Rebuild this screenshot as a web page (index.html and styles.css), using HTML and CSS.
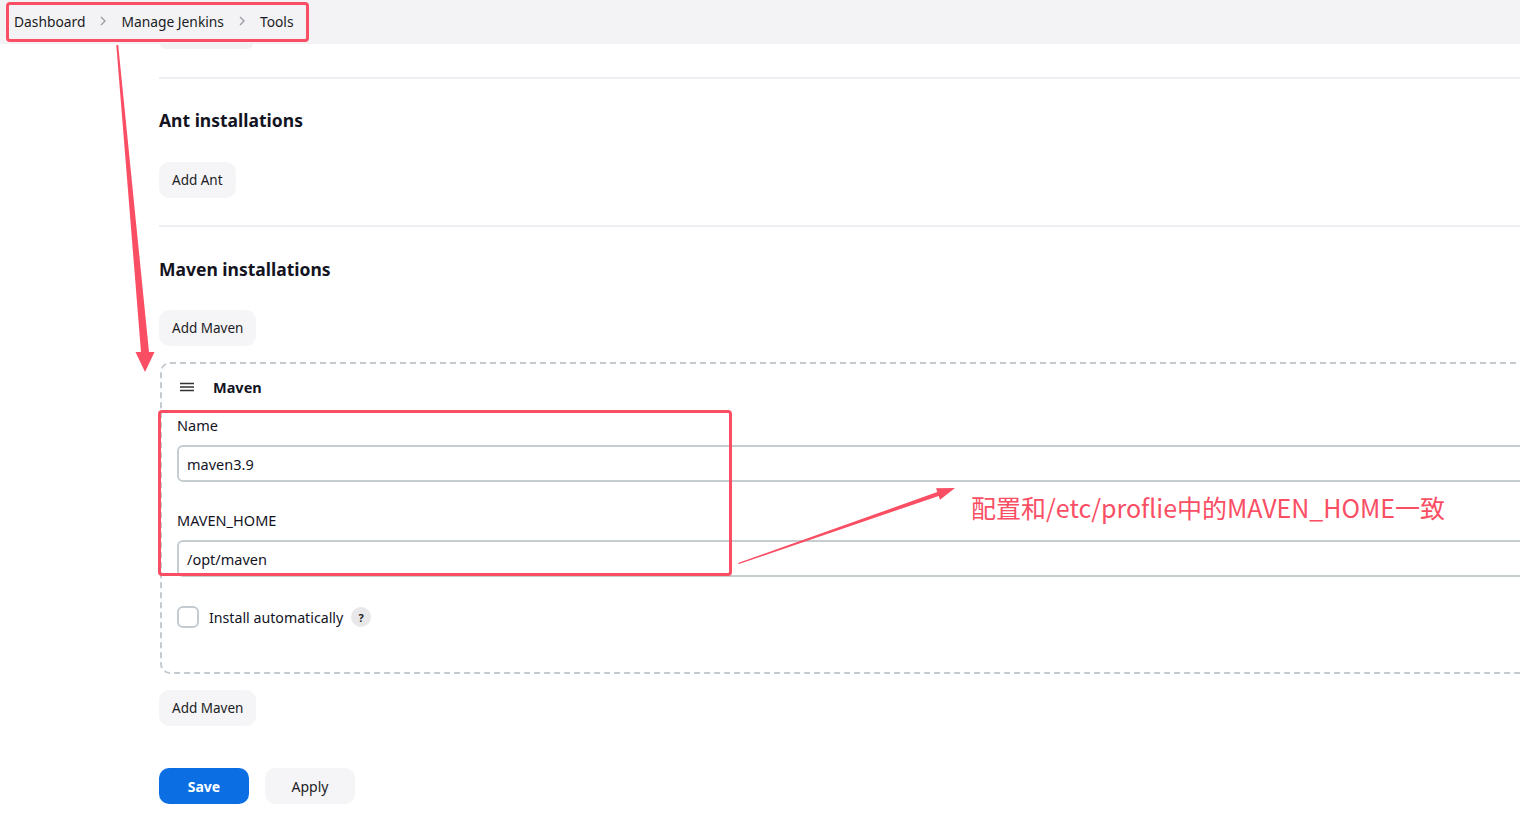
FILE: index.html
```html
<!DOCTYPE html>
<html lang="en">
<head>
<meta charset="utf-8">
<title>Tools - Jenkins</title>
<link rel="stylesheet" href="styles.css">
</head>
<body>
<header class="crumbs">
  <a class="crumb">Dashboard</a>
  <span class="sep"><svg width="10" height="12" viewBox="0 0 10 12"><path d="M3 2l4 4-4 4" fill="none" stroke="#9a9aa2" stroke-width="1.3"/></svg></span>
  <a class="crumb">Manage Jenkins</a>
  <span class="sep"><svg width="10" height="12" viewBox="0 0 10 12"><path d="M3 2l4 4-4 4" fill="none" stroke="#9a9aa2" stroke-width="1.3"/></svg></span>
  <a class="crumb">Tools</a>
</header>
<main class="page">
  <div class="stub"></div>
  <section class="section">
    <h2 class="title">Ant installations</h2>
    <button class="btn">Add Ant</button>
  </section>
  <section class="section">
    <h2 class="title">Maven installations</h2>
    <button class="btn">Add Maven</button>
    <div class="repeat">
      <div class="repeat-head">
        <svg class="drag" width="16" height="12" viewBox="0 0 16 12"><path d="M1 2.5h14M1 6h14M1 9.5h14" stroke="#333" stroke-width="1.5"/></svg>
        <span class="repeat-name">Maven</span>
      </div>
      <div class="field">
        <label class="label">Name</label>
        <div class="input">maven3.9</div>
      </div>
      <div class="field">
        <label class="label">MAVEN_HOME</label>
        <div class="input">/opt/maven</div>
      </div>
      <div class="check">
        <span class="box"></span>
        <span class="check-label">Install automatically</span>
        <span class="help">?</span>
      </div>
    </div>
    <button class="btn btn-after">Add Maven</button>
  </section>
  <div class="actions">
    <button class="btn btn-primary">Save</button>
    <button class="btn btn-apply">Apply</button>
  </div>
</main>

<div class="mark mark-crumbs"></div>
<div class="mark mark-fields"></div>
<svg class="arrows" width="1520" height="822" viewBox="0 0 1520 822">
  <polygon points="116.3,45 118.2,45 149,352 154.5,352 145,372 135.5,352 141,352" fill="#fa4e64"/>
  <polygon points="738,563 937.3,492.1 936,488.3 955,488 940,499.7 938.7,495.9 739,564" fill="#fa4e64"/>
</svg>
<div class="note">配置和/etc/proflie中的MAVEN_HOME一致</div>
</body>
</html>
```
FILE: styles.css
```css
* { box-sizing: border-box; }
html, body { margin: 0; padding: 0; }
body {
  width: 1520px;
  height: 822px;
  overflow: hidden;
  background: #fff;
  font-family: "Noto Sans", "Open Sans", sans-serif;
  color: #14141f;
  position: relative;
}
.crumbs {
  height: 44px;
  background: #f3f3f5;
  display: flex;
  align-items: center;
  padding-left: 14px;
  padding-bottom: 2px;
  font-size: 13.8px;
  color: #1b1b24;
}
.crumb { white-space: nowrap; }
.sep { display: inline-flex; width: 36px; justify-content: center; align-items: center; }
.page {
  padding-left: 159px;
  width: 1700px;
}
.stub {
  width: 93px;
  height: 5px;
  margin-left: 1px;
  background: #f3f3f6;
  border-radius: 0 0 10px 10px;
}
.section {
  border-top: 2px solid #eeeff3;
  margin-top: 28px;
  padding-top: 29px;
}
.section + .section { margin-top: 27px; padding-top: 30px; }
.section + .section .title + .btn { margin-top: 29px; }
.title {
  margin: 0;
  font-size: 17.5px;
  line-height: 24px;
  font-weight: 700;
  color: #14141f;
}
.btn {
  display: block;
  font-family: inherit;
  font-size: 13.5px;
  color: #1b1b24;
  background: #f5f5f7;
  border: 0;
  border-radius: 10px;
  height: 36px;
  padding: 0 13px;
  margin-top: 30px;
}
.repeat {
  margin-top: 16px;
  margin-left: 1px;
  border: 2px dashed #c4cbd0;
  border-radius: 10px;
  padding: 0 0 0 15px;
  height: 312px;
}
.repeat-head {
  display: flex;
  align-items: center;
  height: 46px;
}
.drag { margin-left: 2px; margin-right: 18px; }
.repeat-name { font-weight: 700; font-size: 14.5px; }
.field + .field { margin-top: 28px; }
.label {
  display: block;
  font-size: 14.5px;
  line-height: 20px;
  margin-top: 5px;
  color: #14141f;
}
.input {
  margin-top: 10px;
  height: 37px;
  border: 2px solid #c5cdd1;
  border-radius: 6px;
  padding-left: 8px;
  display: flex;
  align-items: center;
  font-size: 14.5px;
  color: #14141f;
}
.check {
  display: flex;
  align-items: center;
  margin-top: 29px;
}
.box {
  width: 22px;
  height: 22px;
  border: 2px solid #c3cbd0;
  border-radius: 6px;
  margin-right: 10px;
}
.check-label { font-size: 14.2px; }
.help {
  display: inline-flex;
  width: 20px;
  height: 20px;
  border-radius: 50%;
  background: #e8e8eb;
  font-size: 11px;
  font-weight: 700;
  align-items: center;
  justify-content: center;
  margin-left: 8px;
  color: #222;
}
.btn-after { margin-top: 16px; }
.actions {
  display: flex;
  gap: 16px;
  margin-top: 42px;
}
.actions .btn { margin-top: 0; width: 90px; padding: 0; text-align: center; font-size: 14px; }
.btn-primary {
  background: #0b6fe3;
  color: #fff;
  font-weight: 700;
}
.btn-apply { background: #f5f5f7; }
.mark {
  position: absolute;
  border: 3px solid #fa4e64;
  border-radius: 4px;
}
.mark-crumbs { left: 6px; top: 2px; width: 303px; height: 40px; }
.mark-fields { left: 158px; top: 410px; width: 574px; height: 166px; }
.arrows { position: absolute; left: 0; top: 0; pointer-events: none; }
.note {
  position: absolute;
  left: 971px;
  top: 490px;
  font-family: "Noto Sans CJK SC", sans-serif;
  font-size: 25px;
  line-height: 34px;
  color: #fa4e64;
  white-space: nowrap;
}
```
